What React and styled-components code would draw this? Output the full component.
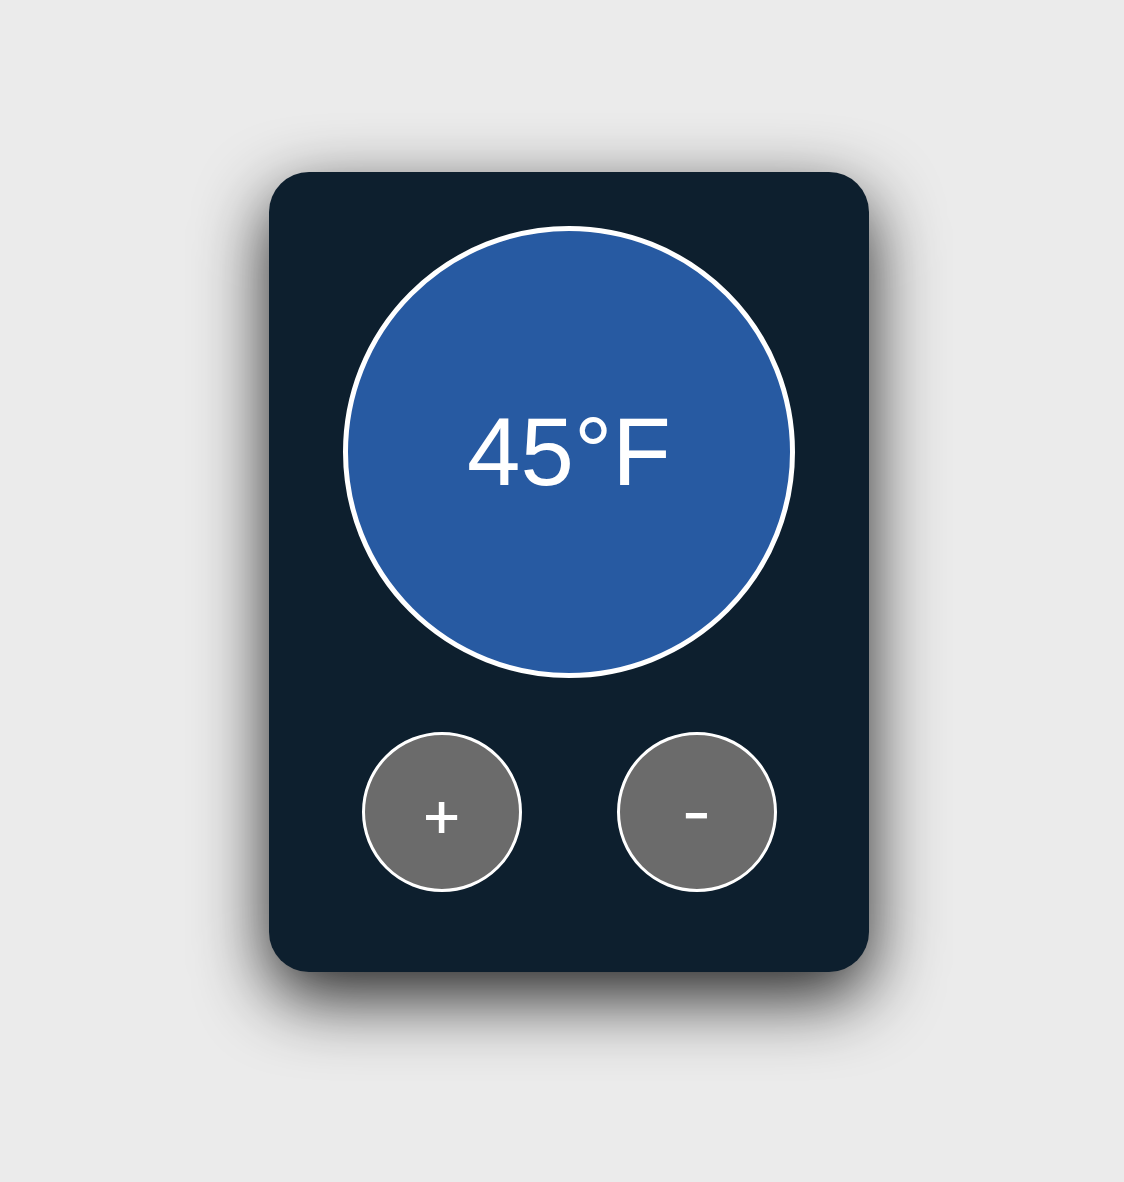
import React, { useState } from "react";
import styled, { createGlobalStyle } from "styled-components";

const GlobalStyle = createGlobalStyle`
  html, body {
    margin: 0;
    background: #ebebeb;
    font-family: "Liberation Sans", Arial, sans-serif;
  }
`;

const Page = styled.div`
  display: flex;
  justify-content: center;
  padding: 172px 0 120px 14px;
`;

const Card = styled.div`
  width: 600px;
  height: 800px;
  box-sizing: border-box;
  background-color: #0d1f2e;
  border-radius: 40px;
  box-shadow: 0 25px 70px rgba(0, 0, 0, 0.85);
  display: flex;
  flex-direction: column;
  align-items: center;
  padding-top: 54px;
  gap: 54px;
`;

const Dial = styled.div`
  width: 452px;
  height: 452px;
  box-sizing: border-box;
  border-radius: 50%;
  border: 5px solid #ffffff;
  background-color: #275aa2;
  display: flex;
  align-items: center;
  justify-content: center;
  color: #ffffff;
  font-size: 96px;
`;

const Controls = styled.div`
  display: flex;
  gap: 95px;
`;

const RoundButton = styled.button`
  width: 160px;
  height: 160px;
  box-sizing: border-box;
  border-radius: 50%;
  border: 3px solid #ffffff;
  background-color: #6b6b6b;
  color: #ffffff;
  font-family: Inter, "Liberation Sans", sans-serif;
  font-size: 66px;
  line-height: 1;
  padding: 0;
  cursor: pointer;
`;

const App = () => {
  const [temp, setTemp] = useState(45);

  return (
    <>
      <GlobalStyle />
      <Page>
        <Card>
          <Dial>{temp}°F</Dial>
          <Controls>
            <RoundButton onClick={() => setTemp(temp + 1)}>+</RoundButton>
            <RoundButton onClick={() => setTemp(temp - 1)}>-</RoundButton>
          </Controls>
        </Card>
      </Page>
    </>
  );
};

export default App;
